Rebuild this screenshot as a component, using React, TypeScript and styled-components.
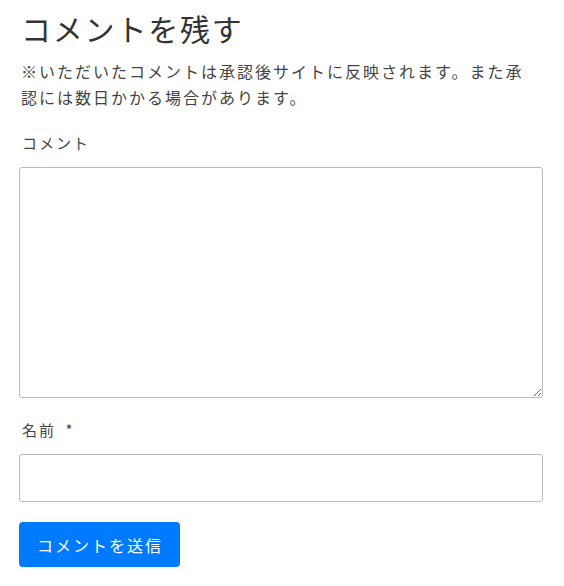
import React from 'react';
import styled, { createGlobalStyle } from 'styled-components';

const GlobalStyle = createGlobalStyle`
  html, body {
    margin: 0;
    padding: 0;
    background: #fff;
  }
  body {
    font-family: "Noto Sans CJK JP", "Noto Sans", sans-serif;
    color: #333;
  }
`;

const Section = styled.section`
  width: 524px;
  padding: 7px 0 0 19px;
`;

const Title = styled.h3`
  margin: 0 0 0 2px;
  font-size: 30px;
  font-weight: 400;
  line-height: 42px;
  letter-spacing: 1.8px;
  color: #333;
`;

const Note = styled.p`
  width: 512px;
  margin: 9px 0 0 2px;
  font-size: 16px;
  line-height: 26px;
  letter-spacing: 2px;
  color: #444;
`;

const Field = styled.div<{ $top: number }>`
  display: flex;
  flex-direction: column;
  margin-top: ${(p) => p.$top}px;
`;

const Label = styled.label`
  margin: 0 0 13px 3px;
  font-size: 15px;
  line-height: 22px;
  letter-spacing: 2px;
  color: #444;
`;

const Required = styled.span`
  margin-left: 4px;
`;

const TextArea = styled.textarea`
  box-sizing: border-box;
  width: 524px;
  height: 231px;
  border: 1px solid #bbb;
  border-radius: 3px;
  padding: 8px 10px;
  font: inherit;
  resize: vertical;
  outline: none;
`;

const Input = styled.input`
  box-sizing: border-box;
  width: 524px;
  height: 48px;
  border: 1px solid #bbb;
  border-radius: 3px;
  padding: 6px 10px;
  font: inherit;
  outline: none;
`;

const SubmitButton = styled.button`
  margin-top: 20px;
  height: 45px;
  padding: 0 17px 0 18px;
  border: none;
  border-radius: 4px;
  background: #007bff;
  color: #fff;
  font-family: "Noto Sans CJK JP", "Noto Sans", sans-serif;
  font-size: 16px;
  letter-spacing: 2px;
  cursor: pointer;
`;

export default function App() {
  return (
    <>
      <GlobalStyle />
      <Section>
        <Title>コメントを残す</Title>
        <Note>※いただいたコメントは承認後サイトに反映されます。また承認には数日かかる場合があります。</Note>
        <Field $top={22}>
          <Label htmlFor="comment">コメント</Label>
          <TextArea id="comment" />
        </Field>
        <Field $top={21}>
          <Label htmlFor="author">
            名前 <Required>*</Required>
          </Label>
          <Input id="author" type="text" />
        </Field>
        <SubmitButton type="submit">コメントを送信</SubmitButton>
      </Section>
    </>
  );
}
